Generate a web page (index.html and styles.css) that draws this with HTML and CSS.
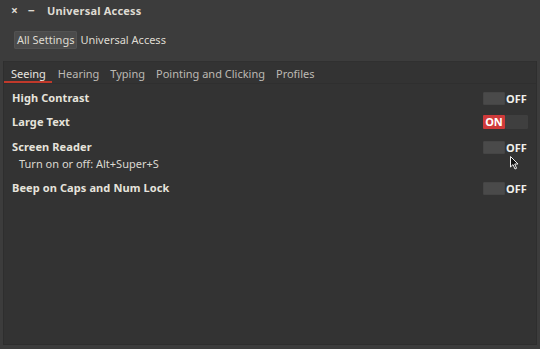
FILE: index.html
```html
<!DOCTYPE html>
<html>
<head>
<meta charset="utf-8">
<link rel="stylesheet" href="styles.css">
</head>
<body>
<div class="window">
  <div class="titlebar">
    <span class="wbtn close">×</span>
    <span class="wbtn min">−</span>
    <span class="title">Universal Access</span>
  </div>
  <div class="toolbar">
    <span class="crumb active">All Settings</span><span class="crumb">Universal Access</span>
  </div>
  <div class="panel">
    <div class="tabs">
      <span class="tab selected">Seeing</span>
      <span class="tab">Hearing</span>
      <span class="tab">Typing</span>
      <span class="tab">Pointing and Clicking</span>
      <span class="tab">Profiles</span>
    </div>
    <div class="rows">
      <div class="row">
        <span class="label">High Contrast</span>
        <span class="switch off"><span class="knob"></span><span class="state">OFF</span></span>
      </div>
      <div class="row">
        <span class="label">Large Text</span>
        <span class="switch on"><span class="state">ON</span><span class="knob"></span></span>
      </div>
      <div class="row multi">
        <div class="texts">
          <span class="label">Screen Reader</span>
          <span class="sub">Turn on or off: Alt+Super+S</span>
        </div>
        <span class="switch off"><span class="knob"></span><span class="state">OFF</span>
          <svg class="cursor" width="9" height="14" viewBox="0 0 9 14"><path d="M0.5 0.5 L0.5 11 L3 8.6 L5 13 L6.6 12.3 L4.7 8 L8 8 Z" fill="#111" stroke="#eee" stroke-width="1"/></svg>
        </span>
      </div>
      <div class="row">
        <span class="label">Beep on Caps and Num Lock</span>
        <span class="switch off"><span class="knob"></span><span class="state">OFF</span></span>
      </div>
    </div>
  </div>
</div>
</body>
</html>
```
FILE: styles.css
```css
html, body {
  margin: 0;
  padding: 0;
  background: #3c3c3c;
}
body {
  width: 540px;
  height: 349px;
  overflow: hidden;
  font-family: "Noto Sans", "DejaVu Sans", sans-serif;
  font-size: 11px;
  color: #dfdbd2;
}
.window {
  display: flex;
  flex-direction: column;
  height: 349px;
  background: #3c3c3c;
}
.titlebar {
  height: 21px;
  display: flex;
  align-items: center;
  padding-left: 6px;
  color: #dfdbd2;
}
.wbtn {
  font-weight: bold;
  width: 17px;
  text-align: center;
  font-size: 12px;
}
.title {
  margin-left: 7px;
  font-weight: bold;
  font-size: 11px;
  letter-spacing: 0.2px;
}
.toolbar {
  height: 41px;
  display: flex;
  align-items: flex-start;
  padding: 10px 0 0 14px;
  box-sizing: border-box;
}
.crumb {
  height: 18px;
  line-height: 18px;
  padding: 0 3px;
  color: #dfdbd2;
}
.crumb.active {
  background: #4b4b4b;
  border-radius: 2px;
  box-shadow: inset 0 0 0 1px #525252;
}
.panel {
  flex: 1;
  margin: 0 4px 5px 4px;
  background: #333333;
  box-shadow: 0 -1px 0 #303030, 0 0 0 1px #2e2e2e;
  display: flex;
  flex-direction: column;
}
.tabs {
  height: 21px;
  display: flex;
  align-items: stretch;
  border-bottom: 1px solid #2f2f2f;
}
.tab {
  padding: 4px 5px 0 6px;
  color: #bdbab3;
  line-height: 15px;
}
.tab.selected {
  color: #e8e6e0;
  box-shadow: inset 0 -2px 0 #c0392b;
  padding-left: 7px;
  padding-right: 6px;
}
.rows {
  display: flex;
  flex-direction: column;
  padding: 2px 8px 0 8px;
}
.row {
  display: flex;
  justify-content: space-between;
  align-items: center;
  height: 24px;
}
.row.multi {
  height: 42px;
  align-items: flex-start;
  padding-top: 5px;
  box-sizing: border-box;
}
.texts {
  display: flex;
  flex-direction: column;
}
.label {
  font-weight: bold;
  line-height: 16px;
  color: #e6e3dc;
  letter-spacing: 0.1px;
}
.sub {
  line-height: 16px;
  padding-left: 7px;
  margin-top: 1px;
  color: #dcd9d2;
}
.switch {
  display: flex;
  align-items: center;
  width: 45px;
  height: 14px;
  position: relative;
  font-size: 11px;
  font-weight: bold;
}
.row.multi .switch { margin-top: 1px; }
.switch .knob {
  width: 22px;
  height: 13px;
  background: #4a4a4a;
  border: 1px solid #454545;
  border-radius: 1px;
  box-sizing: border-box;
}
.switch.off .state {
  padding-left: 1px;
  color: #f0f0ec;
}
.switch.on .state {
  width: 22px;
  height: 14px;
  line-height: 14px;
  background: #cf3a3a;
  color: #fff;
  text-align: center;
  border-radius: 1px;
}
.switch.on .knob {
  background: #3f3f3f;
  border-color: #3f3f3f;
  width: 23px;
  height: 14px;
}
.cursor {
  position: absolute;
  left: 27px;
  top: 16px;
}
```
